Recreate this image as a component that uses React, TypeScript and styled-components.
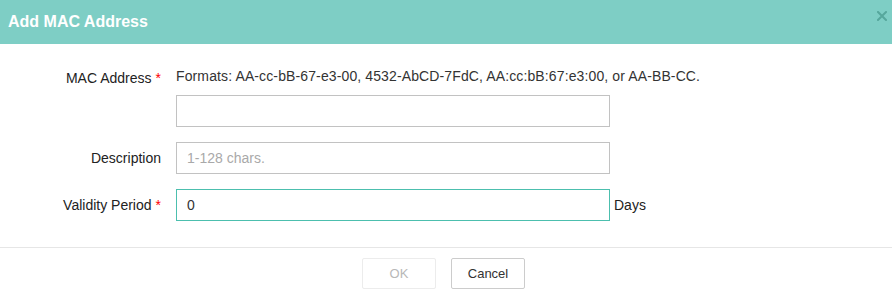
import styled, { createGlobalStyle } from "styled-components";
import { ReactNode } from "react";

const GlobalStyle = createGlobalStyle`
  html, body {
    margin: 0;
    padding: 0;
    background: #ffffff;
  }
  body {
    font-family: "Liberation Sans", Arial, sans-serif;
    font-size: 14px;
    color: #333333;
  }
`;

const Dialog = styled.div`
  width: 892px;
  height: 297px;
  display: flex;
  flex-direction: column;
  background: #ffffff;
  overflow: hidden;
`;

const Header = styled.div`
  position: relative;
  height: 44px;
  display: flex;
  align-items: center;
  padding-left: 8px;
  background: #7ecec5;
`;

const Title = styled.h2`
  margin: 0;
  font-size: 16px;
  font-weight: 700;
  color: #ffffff;
`;

const CloseButton = styled.button`
  position: absolute;
  right: 5px;
  top: 11px;
  width: 10px;
  height: 10px;
  padding: 0;
  border: none;
  background: transparent;
  display: flex;
  cursor: pointer;
`;

const Body = styled.div`
  display: flex;
  flex-direction: column;
  gap: 15px;
  padding: 22px 0 26px;
`;

const Row = styled.div`
  display: flex;
  align-items: flex-start;
`;

const Label = styled.label<{ $top?: boolean }>`
  width: 161px;
  margin-right: 15px;
  flex-shrink: 0;
  text-align: right;
  color: #222222;
  line-height: ${(p) => (p.$top ? "20px" : "32px")};
  padding-top: ${(p) => (p.$top ? "2px" : "0")};
`;

const Required = styled.span`
  color: #ff0000;
  margin-left: 4px;
`;

const Control = styled.div`
  display: flex;
  flex-direction: column;
  gap: 9px;
`;

const Hint = styled.div`
  line-height: 20px;
  color: #333333;
  letter-spacing: 0.12px;
  white-space: nowrap;
`;

const InputLine = styled.div`
  display: flex;
  align-items: center;
`;

const TextInput = styled.input<{ $active?: boolean }>`
  box-sizing: border-box;
  width: 434px;
  height: 32px;
  padding: 0 10px;
  border: 1px solid ${(p) => (p.$active ? "#4cbfae" : "#c2c2c2")};
  border-radius: 0;
  outline: none;
  font-family: "Liberation Sans", Arial, sans-serif;
  font-size: 14px;
  color: #333333;
  background: #ffffff;

  &::placeholder {
    color: #a9a9a9;
  }
`;

const Suffix = styled.span`
  margin-left: 4px;
  color: #222222;
`;

const Footer = styled.div`
  border-top: 1px solid #e6e6e6;
  display: flex;
  justify-content: center;
  gap: 15px;
  padding: 10px 5px 0 0;
`;

const Button = styled.button<{ $disabled?: boolean }>`
  box-sizing: border-box;
  width: 74px;
  height: 31px;
  border: 1px solid ${(p) => (p.$disabled ? "#ececec" : "#cccccc")};
  border-radius: 2px;
  background: #ffffff;
  font-family: "Liberation Sans", Arial, sans-serif;
  font-size: 13px;
  color: ${(p) => (p.$disabled ? "#b8b8b8" : "#333333")};
  cursor: ${(p) => (p.$disabled ? "default" : "pointer")};
`;

function Field({
  label,
  required,
  top,
  children,
}: {
  label: string;
  required?: boolean;
  top?: boolean;
  children: ReactNode;
}) {
  return (
    <Row>
      <Label $top={top}>
        {label}
        {required && <Required>*</Required>}
      </Label>
      {children}
    </Row>
  );
}

export default function App() {
  return (
    <>
      <GlobalStyle />
      <Dialog>
        <Header>
          <Title>Add MAC Address</Title>
          <CloseButton aria-label="Close">
            <svg width="10" height="10" viewBox="0 0 10 10">
              <path
                d="M1 1L9 9M9 1L1 9"
                stroke="#56a79c"
                strokeWidth="2"
                strokeLinecap="square"
              />
            </svg>
          </CloseButton>
        </Header>

        <Body>
          <Field label="MAC Address" required top>
            <Control>
              <Hint>
                Formats: AA-cc-bB-67-e3-00, 4532-AbCD-7FdC, AA:cc:bB:67:e3:00,
                or AA-BB-CC.
              </Hint>
              <TextInput />
            </Control>
          </Field>
          <Field label="Description">
            <TextInput placeholder="1-128 chars." />
          </Field>
          <Field label="Validity Period" required>
            <InputLine>
              <TextInput $active defaultValue="0" />
              <Suffix>Days</Suffix>
            </InputLine>
          </Field>
        </Body>

        <Footer>
          <Button $disabled disabled>
            OK
          </Button>
          <Button>Cancel</Button>
        </Footer>
      </Dialog>
    </>
  );
}
